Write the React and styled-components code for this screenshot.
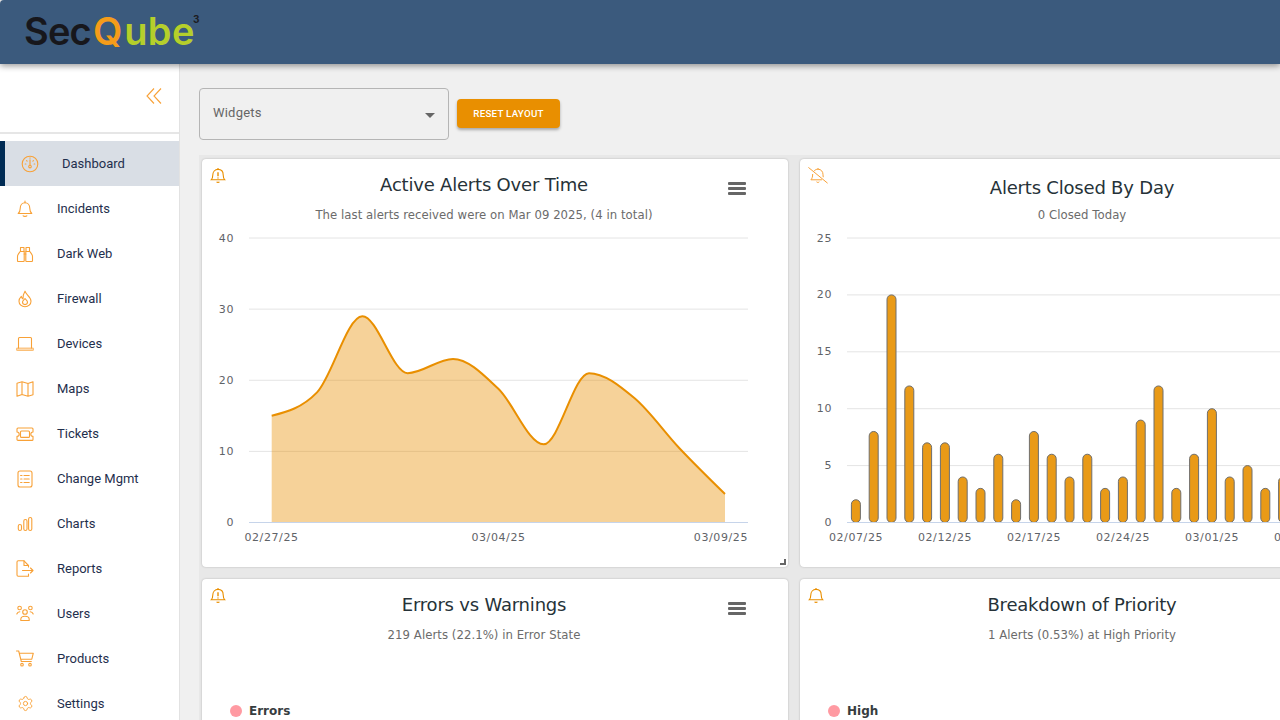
import React from "react";
import styled, { createGlobalStyle } from "styled-components";
import { Settings } from "lucide-react";

const ORANGE = "#e98f00";
const ICON = "#f8a137";

const GlobalStyle = createGlobalStyle`
  html, body {
    margin: 0;
    width: 1280px;
    height: 720px;
    overflow: hidden;
    background: #f0f0f0;
    font-family: Roboto, "Liberation Sans", sans-serif;
  }
  * { box-sizing: border-box; }
`;

const Page = styled.div`
  width: 1280px;
  height: 720px;
  display: flex;
  flex-direction: column;
  overflow: hidden;
`;

const Header = styled.header`
  height: 64px;
  flex: none;
  background: #3b5a7d;
  display: flex;
  align-items: center;
  padding-left: 24px;
  box-shadow: 0 2px 6px rgba(0, 0, 0, 0.4);
  position: relative;
  z-index: 2;
  border-top-left-radius: 4px;
`;

const Logo = styled.div`
  position: relative;
  display: flex;
  font-family: Inter, "Open Sans", sans-serif;
  font-size: 38px;
  font-weight: 600;
  line-height: 38px;
  margin-top: -3px;
`;

const LogoPart = styled.span`
  color: ${(p) => p.$color};
  margin-left: ${(p) => p.$gap || 0}px;
  letter-spacing: ${(p) => p.$spacing || 0}px;
`;

const LogoSup = styled.sup`
  position: absolute;
  left: 169px;
  top: 2px;
  font-size: 10px;
  line-height: 10px;
  letter-spacing: 0;
  color: #1c1c22;
  font-weight: 700;
`;

const Body = styled.div`
  flex: 1;
  display: flex;
  min-height: 0;
`;

const Sidebar = styled.aside`
  width: 180px;
  flex: none;
  background: #fff;
  border-right: 1px solid #e2e2e2;
  display: flex;
  flex-direction: column;
`;

const Collapse = styled.div`
  height: 70px;
  flex: none;
  border-bottom: 2px solid #e6e6e6;
  display: flex;
  justify-content: flex-end;
  align-items: flex-start;
  padding: 24px 17px 0 0;
  color: ${ICON};
  margin-bottom: 7px;
`;

const NavItem = styled.div`
  height: 45px;
  flex: none;
  display: flex;
  align-items: center;
  font-size: 13px;
  color: #1f2f4d;
  padding-left: 16px;
  background: ${(p) => (p.$active ? "#d9dee5" : "transparent")};
  border-left: ${(p) => (p.$active ? "5px solid #002b54" : "0")};
`;

const NavIcon = styled.span`
  width: 18px;
  display: flex;
  justify-content: center;
  color: ${ICON};
  margin-right: 23px;
`;

const NavSvg = styled.svg.attrs({ viewBox: "0 0 18 18" })`
  width: 18px;
  height: 18px;
  fill: none;
  stroke: currentColor;
  stroke-width: 1.1;
  stroke-linecap: round;
  stroke-linejoin: round;
`;

const Main = styled.main`
  flex: 1;
  min-width: 0;
  display: flex;
  flex-direction: column;
  overflow: hidden;
`;

const Toolbar = styled.div`
  height: 91px;
  flex: none;
  display: flex;
  align-items: flex-start;
  gap: 8px;
  padding: 24px 0 0 19px;
`;

const Select = styled.div`
  width: 250px;
  height: 52px;
  border: 1px solid #b5b5b5;
  border-radius: 4px;
  display: flex;
  align-items: center;
  justify-content: space-between;
  padding: 0 13px 4px 13px;
  font-size: 13px;
  letter-spacing: 0.2px;
  color: #666;
`;

const Caret = styled.span`
  width: 0;
  height: 0;
  border-left: 5px solid transparent;
  border-right: 5px solid transparent;
  border-top: 5px solid #666;
  margin-top: 6px;
`;

const ResetButton = styled.button`
  height: 29px;
  width: 103px;
  margin-top: 11px;
  border: 0;
  border-radius: 4px;
  background: ${ORANGE};
  color: #fff;
  font-family: Roboto, sans-serif;
  font-size: 9.75px;
  font-weight: 500;
  letter-spacing: 0.25px;
  text-transform: uppercase;
  box-shadow: 0 2px 3px rgba(0, 0, 0, 0.3);
  padding: 0;
`;

const Grid = styled.div`
  flex: 1;
  background: #e8e8e8;
  margin-left: 19px;
  display: grid;
  grid-template-columns: 586px 586px;
  grid-auto-rows: 408px;
  gap: 12px;
  padding: 4px 0 0 3px;
  width: 1200px;
  align-content: start;
`;

const Card = styled.section`
  background: #fff;
  border-radius: 4px;
  box-shadow: 0 0 2px rgba(0, 0, 0, 0.25);
  position: relative;
  overflow: hidden;
`;

const CardBell = styled.span`
  position: absolute;
  left: ${(p) => p.$left || 8}px;
  top: 8px;
  color: ${(p) => p.$color || ORANGE};
  line-height: 0;
`;

const TitleBlock = styled.div`
  width: 564px;
  display: flex;
  flex-direction: column;
  align-items: center;
  font-family: "DejaVu Sans", Verdana, sans-serif;
  padding-top: ${(p) => p.$top}px;
`;

const Title = styled.h2`
  margin: 0;
  font-size: 18px;
  font-weight: 400;
  line-height: 22px;
  letter-spacing: -0.2px;
  color: #263238;
`;

const Subtitle = styled.div`
  margin-top: ${(p) => p.$gap}px;
  font-size: 11.7px;
  line-height: 14px;
  letter-spacing: 0.05px;
  color: #6b6b6b;
`;

const Menu = styled.div`
  position: absolute;
  right: 42px;
  top: 23px;
  width: 18px;
  display: flex;
  flex-direction: column;
  gap: 2px;
`;

const MenuBar = styled.span`
  height: 3px;
  border-radius: 1px;
  background: #666;
`;

const ChartSvg = styled.svg`
  position: absolute;
  left: 0;
  top: 0;
  width: 586px;
  height: 408px;
  font-family: "DejaVu Sans", Verdana, sans-serif;
`;

const Resize = styled.span`
  position: absolute;
  right: 2px;
  bottom: 2px;
  width: 6px;
  height: 6px;
  border-right: 2px solid #666;
  border-bottom: 2px solid #666;
`;

const Legend = styled.div`
  position: absolute;
  left: 28px;
  top: 125px;
  display: flex;
  flex-direction: column;
  gap: 1px;
  font-family: "DejaVu Sans", Verdana, sans-serif;
  font-size: 12px;
  font-weight: 700;
  color: #373d3f;
`;

const LegendRow = styled.div`
  display: flex;
  align-items: center;
  gap: 7px;
  height: 14px;
`;

const LegendDot = styled.span`
  width: 12px;
  height: 12px;
  border-radius: 50%;
  background: ${(p) => p.$color};
`;

function GaugeIcon() {
  return (
    <NavSvg>
      <circle cx="9" cy="9" r="7.8" />
      <path d="M9 4.8v5.2M4.2 9h.7M13.1 9h.7M5.6 5.6l.5.5M12.4 5.6l-.5.5M9 2.8v.4" />
      <circle cx="9" cy="11.6" r="1.3" />
    </NavSvg>
  );
}

function BellIcon() {
  return (
    <NavSvg>
      <path d="M2.2 13.5c1.4-1.3 2-2.4 2-5 0-3.2 2-5.7 4.8-5.7s4.8 2.5 4.8 5.7c0 2.6.6 3.7 2 5z" />
      <path d="M7.2 15.8c.6.8 3 .8 3.6 0M9 1v1.8" />
    </NavSvg>
  );
}

function BinocularsIcon() {
  return (
    <NavSvg>
      <path d="M2.2 16.5h5.3a.7.7 0 0 0 .7-.7V6.5h-4C3 8 1.5 9.5 1.5 11.5v4.3a.7.7 0 0 0 .7.7z" />
      <path d="M15.8 16.5h-5.3a.7.7 0 0 1-.7-.7V6.5h4c1.2 1.5 2.7 3 2.7 5v4.3a.7.7 0 0 1-.7.7z" />
      <path d="M4.5 6.5v-4h3.5v4M10 6.5v-4h3.5v4M8.2 9h1.6" />
    </NavSvg>
  );
}

function FlameIcon() {
  return (
    <NavSvg>
      <path d="M9 1.2c.6 3.2 6 5.4 6 10a6 5.6 0 0 1-12 0c0-2.2 1.1-3.6 2.3-4.8.2 1.3.8 2.1 1.7 2.5C6.8 6.2 7.6 3.4 9 1.2z" />
      <path d="M9 14.6a2.5 2.5 0 0 1-2.5-2.5c0-1.4 1.3-2.2 2.5-3.6 1.2 1.4 2.5 2.2 2.5 3.6A2.5 2.5 0 0 1 9 14.6z" />
    </NavSvg>
  );
}

function LaptopIcon() {
  return (
    <NavSvg>
      <path d="M2.5 13V3.5a1 1 0 0 1 1-1h11a1 1 0 0 1 1 1V13" />
      <rect x="0.5" y="13" width="17" height="2.5" rx="1" fill="currentColor" fillOpacity="0.4" strokeOpacity="0.6" />
    </NavSvg>
  );
}

function MapIcon() {
  return (
    <NavSvg>
      <path d="M1 3.2 6 1.8l6 1.7 5-1.7v12.9l-5 1.5-6-1.7-5 1.7zM6 1.8v12.7M12 3.5v12.7" />
    </NavSvg>
  );
}

function TicketIcon() {
  return (
    <NavSvg>
      <path d="M2 3h14a1 1 0 0 1 1 1v3a2.2 2.2 0 0 0 0 4.4v3a1 1 0 0 1-1 1H2a1 1 0 0 1-1-1v-3A2.2 2.2 0 0 0 1 7V4a1 1 0 0 1 1-1z" />
      <rect x="4.5" y="6" width="9" height="6.4" rx="1" />
    </NavSvg>
  );
}

function ChecklistIcon() {
  return (
    <NavSvg>
      <rect x="2" y="1" width="14" height="16" rx="2" />
      <path d="M8 5.5h5.2M8 9h5.2M8 12.5h5.2M4.6 5.5h1.4M4.6 9h1.4M4.6 12.5h1.4" />
    </NavSvg>
  );
}

function BarsIcon() {
  return (
    <NavSvg>
      <rect x="2.3" y="9.5" width="3.2" height="6" rx="1.6" />
      <rect x="7.8" y="4.5" width="3.2" height="11" rx="1.6" />
      <rect x="12.6" y="2.5" width="3.2" height="13" rx="1.6" />
    </NavSvg>
  );
}

function ReportIcon() {
  return (
    <NavSvg>
      <path d="M12.5 7V5.5L8 .8H2.2A1.2 1.2 0 0 0 1 2v13a1.2 1.2 0 0 0 1.2 1.2h10.3V14" />
      <path d="M8 .8v4.7h4.5M6.5 10.5h10.5M14.5 8l2.5 2.5-2.5 2.5" />
    </NavSvg>
  );
}

function UsersIcon() {
  return (
    <NavSvg>
      <circle cx="9" cy="7" r="2.3" />
      <path d="M4.8 15.5v-1.2c0-1.8 1.5-3 4.2-3s4.2 1.2 4.2 3v1.2z" />
      <circle cx="3.6" cy="3" r="1.8" />
      <circle cx="14.4" cy="3" r="1.8" />
      <path d="M.8 9c.5-1.4 1.6-2.2 3-2.2M17.2 9c-.5-1.4-1.6-2.2-3-2.2" />
    </NavSvg>
  );
}

function CartIcon() {
  return (
    <NavSvg>
      <path d="M.5 1h2.2l2.6 10.5h10M3.3 3.2h14l-1.5 6H4.8" />
      <circle cx="6" cy="14.7" r="1.3" />
      <circle cx="14" cy="14.7" r="1.3" />
    </NavSvg>
  );
}

function GearIcon() {
  return <Settings size={17} strokeWidth={1.3} />;
}

const navItems = [
  { label: "Incidents", Icon: BellIcon },
  { label: "Dark Web", Icon: BinocularsIcon },
  { label: "Firewall", Icon: FlameIcon },
  { label: "Devices", Icon: LaptopIcon },
  { label: "Maps", Icon: MapIcon },
  { label: "Tickets", Icon: TicketIcon },
  { label: "Change Mgmt", Icon: ChecklistIcon },
  { label: "Charts", Icon: BarsIcon },
  { label: "Reports", Icon: ReportIcon },
  { label: "Users", Icon: UsersIcon },
  { label: "Products", Icon: CartIcon },
  { label: "Settings", Icon: GearIcon },
];

function DoubleChevron() {
  return (
    <svg width="16" height="16" viewBox="0 0 16 16" fill="none" stroke="currentColor" strokeWidth="1.1">
      <path d="M8 .5 1 8l7 7.5M15 .5 8 8l7 7.5" />
    </svg>
  );
}

function AlertBell() {
  return (
    <svg width="16" height="17" viewBox="0 0 16 17" fill="none" stroke="currentColor" strokeWidth="1.1">
      <path d="M1.2 12.8c1.2-1.2 1.6-2.2 1.6-4.8 0-3.2 2-5.6 5.2-5.6s5.2 2.4 5.2 5.6c0 2.6.4 3.6 1.6 4.8z" />
      <path d="M6.6 14.8c.5.8 2.3.8 2.8 0M8 1v1.4" />
      <path d="M8 5.2v4M8 10.4v1" strokeWidth="1.4" />
    </svg>
  );
}

function PlainBell() {
  return (
    <svg width="16" height="17" viewBox="0 0 16 17" fill="none" stroke="currentColor" strokeWidth="1.1">
      <path d="M1.2 12.8c1.2-1.2 1.6-2.2 1.6-4.8 0-3.2 2-5.6 5.2-5.6s5.2 2.4 5.2 5.6c0 2.6.4 3.6 1.6 4.8z" />
      <path d="M6.6 14.8c.5.8 2.3.8 2.8 0M8 1v1.4" />
    </svg>
  );
}

function MutedBell() {
  return (
    <svg width="20" height="17" viewBox="0 0 20 17" fill="none" stroke="currentColor" strokeWidth="1">
      <path d="M.4.4 19.6 16.2" />
      <path d="M6 4.2C6.8 2.9 8.3 2.2 10 2.2c3 0 5 2.3 5 5.4 0 1 .1 1.9.3 2.6M4.7 7c-.1 3-.6 4.5-1.8 5.8h11" />
      <path d="M8.500 14.800c.5.8 2.300.8 2.800 0M10 1v1.200" />
    </svg>
  );
}

// same idea as d3 curveMonotoneX: flat tangent on local peaks, no overshoot
function smoothPath(points) {
  const n = points.length;
  const sign = (v) => (v < 0 ? -1 : 1);
  const secant = points.slice(0, -1).map((p, i) => (points[i + 1][1] - p[1]) / (points[i + 1][0] - p[0]));
  const tangent = points.map((p, i) => {
    if (i === 0 || i === n - 1) return null;
    const s0 = secant[i - 1];
    const s1 = secant[i];
    const avg = (s0 + s1) / 2;
    return (sign(s0) + sign(s1)) * Math.min(Math.abs(s0), Math.abs(s1), 0.5 * Math.abs(avg));
  });
  tangent[0] = (3 * secant[0] - tangent[1]) / 2;
  tangent[n - 1] = (3 * secant[n - 2] - tangent[n - 2]) / 2;
  let d = `M${points[0][0]} ${points[0][1]}`;
  for (let i = 0; i < n - 1; i++) {
    const dx = (points[i + 1][0] - points[i][0]) / 3;
    const c1y = points[i][1] + dx * tangent[i];
    const c2y = points[i + 1][1] - dx * tangent[i + 1];
    d += ` C${points[i][0] + dx} ${c1y} ${points[i + 1][0] - dx} ${c2y} ${points[i + 1][0]} ${points[i + 1][1]}`;
  }
  return d;
}

const CHART_TOP = 79;
const CHART_BOTTOM = 363.5;

const alertValues = [15, 18.3, 29, 21, 23, 18.8, 11, 21, 17.5, 10.4, 4];
const closedValues = [2, 8, 20, 12, 7, 7, 4, 3, 6, 2, 8, 6, 4, 6, 3, 4, 9, 12, 3, 6, 10, 4, 5, 3, 4];

function AxisLabel({ x, y, children, anchor = "end" }) {
  return (
    <text x={x} y={y} fontSize="11" letterSpacing="0.6" fill="#5f6368" textAnchor={anchor}>
      {children}
    </text>
  );
}

function GridLines({ left, right, ticks, max, labelX }) {
  return ticks.map((t) => {
    const y = CHART_BOTTOM - (t / max) * (CHART_BOTTOM - CHART_TOP);
    return (
      <g key={t}>
        {t !== 0 && <line x1={left} x2={right} y1={y} y2={y} stroke="#e4e4e4" />}
        <AxisLabel x={labelX} y={y + 3.5}>{t}</AxisLabel>
      </g>
    );
  });
}

function AlertsChart() {
  const yOf = (v) => CHART_BOTTOM - (v / 40) * (CHART_BOTTOM - CHART_TOP);
  const pts = alertValues.map((v, i) => [69.7 + i * 45.33, yOf(v)]);
  const line = smoothPath(pts);
  const last = pts[pts.length - 1];
  return (
    <ChartSvg viewBox="0 0 586 408">
      <GridLines left={47} right={546} ticks={[40, 30, 20, 10, 0]} max={40} labelX={32} />
      <path
        d={`${line} L${last[0]} ${CHART_BOTTOM} L${pts[0][0]} ${CHART_BOTTOM} Z`}
        fill={ORANGE}
        fillOpacity="0.4"
      />
      <path d={line} fill="none" stroke={ORANGE} strokeWidth="2" />
      <line x1={47} x2={546} y1={CHART_BOTTOM} y2={CHART_BOTTOM} stroke="#c6d4ea" />
      <AxisLabel x={69.5} y={382} anchor="middle">02/27/25</AxisLabel>
      <AxisLabel x={296.5} y={382} anchor="middle">03/04/25</AxisLabel>
      <AxisLabel x={546} y={382}>03/09/25</AxisLabel>
    </ChartSvg>
  );
}

function ClosedChart() {
  const yOf = (v) => CHART_BOTTOM - (v / 25) * (CHART_BOTTOM - CHART_TOP);
  return (
    <ChartSvg viewBox="0 0 586 408">
      <GridLines left={47} right={586} ticks={[25, 20, 15, 10, 5, 0]} max={25} labelX={32} />
      {closedValues.map((v, i) => {
        const x = 51.4 + i * 17.8;
        return (
          <rect
            key={i}
            x={x}
            y={yOf(v)}
            width={9}
            height={CHART_BOTTOM - yOf(v)}
            rx={4.5}
            fill="#e99a17"
            stroke="#6e6e6e"
            strokeWidth="1"
          />
        );
      })}
      <line x1={47} x2={586} y1={CHART_BOTTOM} y2={CHART_BOTTOM} stroke="#c6d4ea" />
      {["02/07/25", "02/12/25", "02/17/25", "02/24/25", "03/01/25", "03/06/25"].map((d, i) => (
        <AxisLabel key={d} x={56 + i * 89} y={382} anchor="middle">{d}</AxisLabel>
      ))}
    </ChartSvg>
  );
}

function MenuIcon() {
  return (
    <Menu>
      <MenuBar />
      <MenuBar />
      <MenuBar />
    </Menu>
  );
}

export default function App() {
  return (
    <>
      <GlobalStyle />
      <Page>
        <Header>
          <Logo>
            <LogoPart $color="#17171c" $spacing={-0.8}>Sec</LogoPart>
            <LogoPart $color="#f59c1a" $gap={2}>Q</LogoPart>
            <LogoPart $color="#b5cf2b" $gap={2} $spacing={0.3}>ube</LogoPart>
            <LogoSup>3</LogoSup>
          </Logo>
        </Header>
        <Body>
          <Sidebar>
            <Collapse>
              <DoubleChevron />
            </Collapse>
            <NavItem $active>
              <NavIcon>
                <GaugeIcon />
              </NavIcon>
              Dashboard
            </NavItem>
            {navItems.map(({ label, Icon }) => (
              <NavItem key={label}>
                <NavIcon>
                  <Icon />
                </NavIcon>
                {label}
              </NavItem>
            ))}
          </Sidebar>
          <Main>
            <Toolbar>
              <Select>
                Widgets
                <Caret />
              </Select>
              <ResetButton>Reset Layout</ResetButton>
            </Toolbar>
            <Grid>
              <Card>
                <CardBell><AlertBell /></CardBell>
                <TitleBlock $top={15}>
                  <Title>Active Alerts Over Time</Title>
                  <Subtitle $gap={12}>The last alerts received were on Mar 09 2025, (4 in total)</Subtitle>
                </TitleBlock>
                <MenuIcon />
                <AlertsChart />
                <Resize />
              </Card>
              <Card>
                <CardBell $color={ICON}><MutedBell /></CardBell>
                <TitleBlock $top={18}>
                  <Title>Alerts Closed By Day</Title>
                  <Subtitle $gap={9}>0 Closed Today</Subtitle>
                </TitleBlock>
                <ClosedChart />
              </Card>
              <Card>
                <CardBell><AlertBell /></CardBell>
                <TitleBlock $top={15}>
                  <Title>Errors vs Warnings</Title>
                  <Subtitle $gap={12}>219 Alerts (22.1%) in Error State</Subtitle>
                </TitleBlock>
                <MenuIcon />
                <Legend>
                  <LegendRow><LegendDot $color="#ff9aa2" />Errors</LegendRow>
                  <LegendRow><LegendDot $color="#f5d297" />Warnings</LegendRow>
                </Legend>
              </Card>
              <Card>
                <CardBell><PlainBell /></CardBell>
                <TitleBlock $top={15}>
                  <Title>Breakdown of Priority</Title>
                  <Subtitle $gap={12}>1 Alerts (0.53%) at High Priority</Subtitle>
                </TitleBlock>
                <Legend>
                  <LegendRow><LegendDot $color="#ff9aa2" />High</LegendRow>
                  <LegendRow><LegendDot $color="#f5d297" />Medium</LegendRow>
                </Legend>
              </Card>
            </Grid>
          </Main>
        </Body>
      </Page>
    </>
  );
}
